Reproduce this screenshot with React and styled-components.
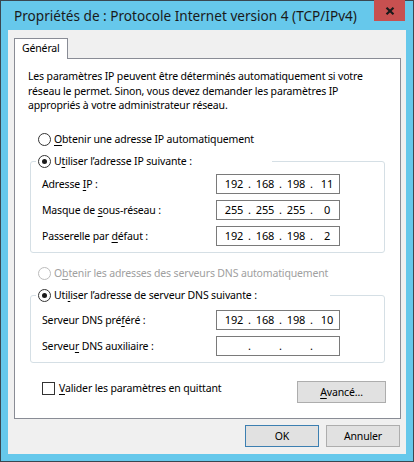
import React from 'react';
import styled, { createGlobalStyle } from 'styled-components';

const FONT = '"Noto Sans", "Open Sans", sans-serif';

const GlobalStyle = createGlobalStyle`
    html, body {
        margin: 0;
        padding: 0;
        background: #66c8eb;
    }
    body {
        font-family: ${FONT};
        font-size: 10.5px;
        letter-spacing: -0.15px;
        color: #000;
    }
`;

const Window = styled.div`
    width: 414px;
    height: 462px;
    box-sizing: border-box;
    border: 1px solid #3a4750;
    background: #66c8eb;
    padding: 0 7px 7px;
    display: flex;
    flex-direction: column;
`;

const TitleBar = styled.div`
    height: 29px;
    display: flex;
    align-items: flex-start;
    justify-content: space-between;
`;

const Title = styled.h1`
    margin: 0;
    padding: 5px 0 0 6px;
    font-size: 13.6px;
    letter-spacing: 0;
    font-weight: normal;
    line-height: 20px;
    white-space: nowrap;
    color: #1a1a1a;
`;

const CloseButton = styled.div`
    width: 31px;
    height: 21px;
    margin: -1px 1px 0 0;
    background: #c75050;
    display: flex;
    align-items: center;
    justify-content: center;
    flex-shrink: 0;
`;

const Body = styled.div`
    flex: 1;
    background: #f0f0f0;
    padding: 8px 5px 0 6px;
    display: flex;
    flex-direction: column;
`;

const Tab = styled.div`
    align-self: flex-start;
    height: 20px;
    line-height: 19px;
    padding: 0 7px;
    border: 1px solid #898c95;
    border-bottom: none;
    background: #fff;
    margin-bottom: -1px;
    position: relative;
    z-index: 1;
`;

const Panel = styled.div`
    height: 361px;
    box-sizing: border-box;
    border: 1px solid #898c95;
    background: #fff;
    padding-top: 10px;
    display: flex;
    flex-direction: column;
`;

const Intro = styled.p`
    margin: 0;
    padding: 0 13px;
    line-height: 14.5px;
    white-space: nowrap;
`;

const OptionRow = styled.label`
    display: flex;
    align-items: center;
    height: 15px;
    margin: ${p => p.$top}px 0 0 23px;
    color: ${p => (p.$disabled ? '#a0a0a0' : '#000')};
`;

const Radio = styled.span`
    width: 11px;
    height: 11px;
    border-radius: 50%;
    border: 1px solid ${p => (p.$disabled ? '#bcbcbc' : '#333')};
    background: #fff;
    margin-right: 3px;
    display: flex;
    align-items: center;
    justify-content: center;
    flex-shrink: 0;

    &::after {
        content: '';
        width: 5px;
        height: 5px;
        border-radius: 50%;
        background: #1a1a1a;
        display: ${p => (p.$checked ? 'block' : 'none')};
    }
`;

const Group = styled.fieldset`
    margin: ${p => p.$top}px 15px 0;
    padding: 0 11px ${p => p.$bottom}px;
    border: 1px solid #d5dfe5;
    border-radius: 3px;
    min-width: 0;
`;

const Legend = styled.legend`
    width: ${p => p.$width}px;
    box-sizing: border-box;
    margin-left: -6px;
    padding: 0 2px;
    height: 15px;
    display: flex;
    align-items: center;
`;

const Rows = styled.div`
    display: flex;
    flex-direction: column;
    gap: 6px;
    margin-top: ${p => p.$top}px;
`;

const FieldRow = styled.div`
    display: grid;
    grid-template-columns: 174px 124px;
    align-items: center;
`;

const IpBox = styled.div`
    height: 20px;
    box-sizing: border-box;
    border: 1px solid #7a7a7a;
    display: flex;
    align-items: center;
    padding-left: 5px;
    line-height: 18px;
    font-size: 11px;
`;

const Octet = styled.span`
    width: 24px;
    text-align: center;
`;

const Dot = styled.span`
    width: 7px;
    text-align: center;
`;

const BottomRow = styled.div`
    display: flex;
    align-items: flex-start;
    justify-content: space-between;
    margin: 18px 14px 0 27px;
`;

const CheckLabel = styled.label`
    display: flex;
    align-items: center;
    gap: 4px;
    height: 13px;
    margin-top: 1px;
`;

const CheckBox = styled.span`
    width: 11px;
    height: 11px;
    border: 1px solid #333;
    background: #fff;
`;

const Button = styled.button`
    width: ${p => p.$width}px;
    height: 22px;
    box-sizing: border-box;
    border: 1px solid ${p => (p.$default ? '#3c7fb1' : '#adadad')};
    background: #e1e1e1;
    font-family: ${FONT};
    font-size: 10.5px;
    letter-spacing: -0.15px;
    color: #000;
    padding: 0;
`;

const Footer = styled.div`
    display: flex;
    justify-content: flex-end;
    gap: 7px;
    margin: 6px 1px 0 0;
`;

const Key = styled.span`
    text-decoration: underline;
    text-underline-offset: 2px;
`;

const IpValue = ({ value }) => {
    const parts = value ? value.split('.') : ['', '', '', ''];
    return (
        <IpBox>
            {parts.map((part, i) => (
                <React.Fragment key={i}>
                    <Octet>{part}</Octet>
                    {i < 3 && <Dot>.</Dot>}
                </React.Fragment>
            ))}
        </IpBox>
    );
};

const ipFields = [
    { label: <>Adresse <Key>I</Key>P :</>, value: '192.168.198.11' },
    { label: <>Masque de <Key>s</Key>ous-réseau :</>, value: '255.255.255.0' },
    { label: <>Passerelle par <Key>d</Key>éfaut :</>, value: '192.168.198.2' },
];

const dnsFields = [
    { label: <>Serveur DNS pré<Key>f</Key>éré :</>, value: '192.168.198.10' },
    { label: <>Serveu<Key>r</Key> DNS auxiliaire :</>, value: '' },
];

const FieldList = ({ fields, top }) => (
    <Rows $top={top}>
        {fields.map((f, i) => (
            <FieldRow key={i}>
                <span>{f.label}</span>
                <IpValue value={f.value} />
            </FieldRow>
        ))}
    </Rows>
);

export default function App() {
    return (
        <>
            <GlobalStyle />
            <Window>
                <TitleBar>
                    <Title>Propriétés de : Protocole Internet version 4 (TCP/IPv4)</Title>
                    <CloseButton>
                        <svg width="10" height="8" viewBox="0 0 10 8">
                            <path d="M1.5 0.8 L8.5 7.2 M8.5 0.8 L1.5 7.2" stroke="#1a1a1a" strokeWidth="2.2" />
                        </svg>
                    </CloseButton>
                </TitleBar>
                <Body>
                    <Tab>Général</Tab>
                    <Panel>
                        <Intro>
                            Les paramètres IP peuvent être déterminés automatiquement si votre<br />
                            réseau le permet. Sinon, vous devez demander les paramètres IP<br />
                            appropriés à votre administrateur réseau.
                        </Intro>

                        <OptionRow $top={19}>
                            <Radio />
                            <span><Key>O</Key>btenir une adresse IP automatiquement</span>
                        </OptionRow>

                        <Group $top={7} $bottom={6}>
                            <Legend $width={236}>
                                <Radio $checked />
                                <span>U<Key>t</Key>iliser l’adresse IP suivante :</span>
                            </Legend>
                            <FieldList fields={ipFields} top={5} />
                        </Group>

                        <OptionRow $top={13} $disabled>
                            <Radio $disabled />
                            <span>O<Key>b</Key>tenir les adresses des serveurs DNS automatiquement</span>
                        </OptionRow>

                        <Group $top={7} $bottom={6}>
                            <Legend $width={294}>
                                <Radio $checked />
                                <span>Uti<Key>l</Key>iser l’adresse de serveur DNS suivante :</span>
                            </Legend>
                            <FieldList fields={dnsFields} top={7} />
                        </Group>

                        <BottomRow>
                            <CheckLabel>
                                <CheckBox />
                                <span><Key>V</Key>alider les paramètres en quittant</span>
                            </CheckLabel>
                            <Button $width={89}><Key>A</Key>vancé…</Button>
                        </BottomRow>
                    </Panel>
                    <Footer>
                        <Button $width={74} $default>OK</Button>
                        <Button $width={74}>Annuler</Button>
                    </Footer>
                </Body>
            </Window>
        </>
    );
}
